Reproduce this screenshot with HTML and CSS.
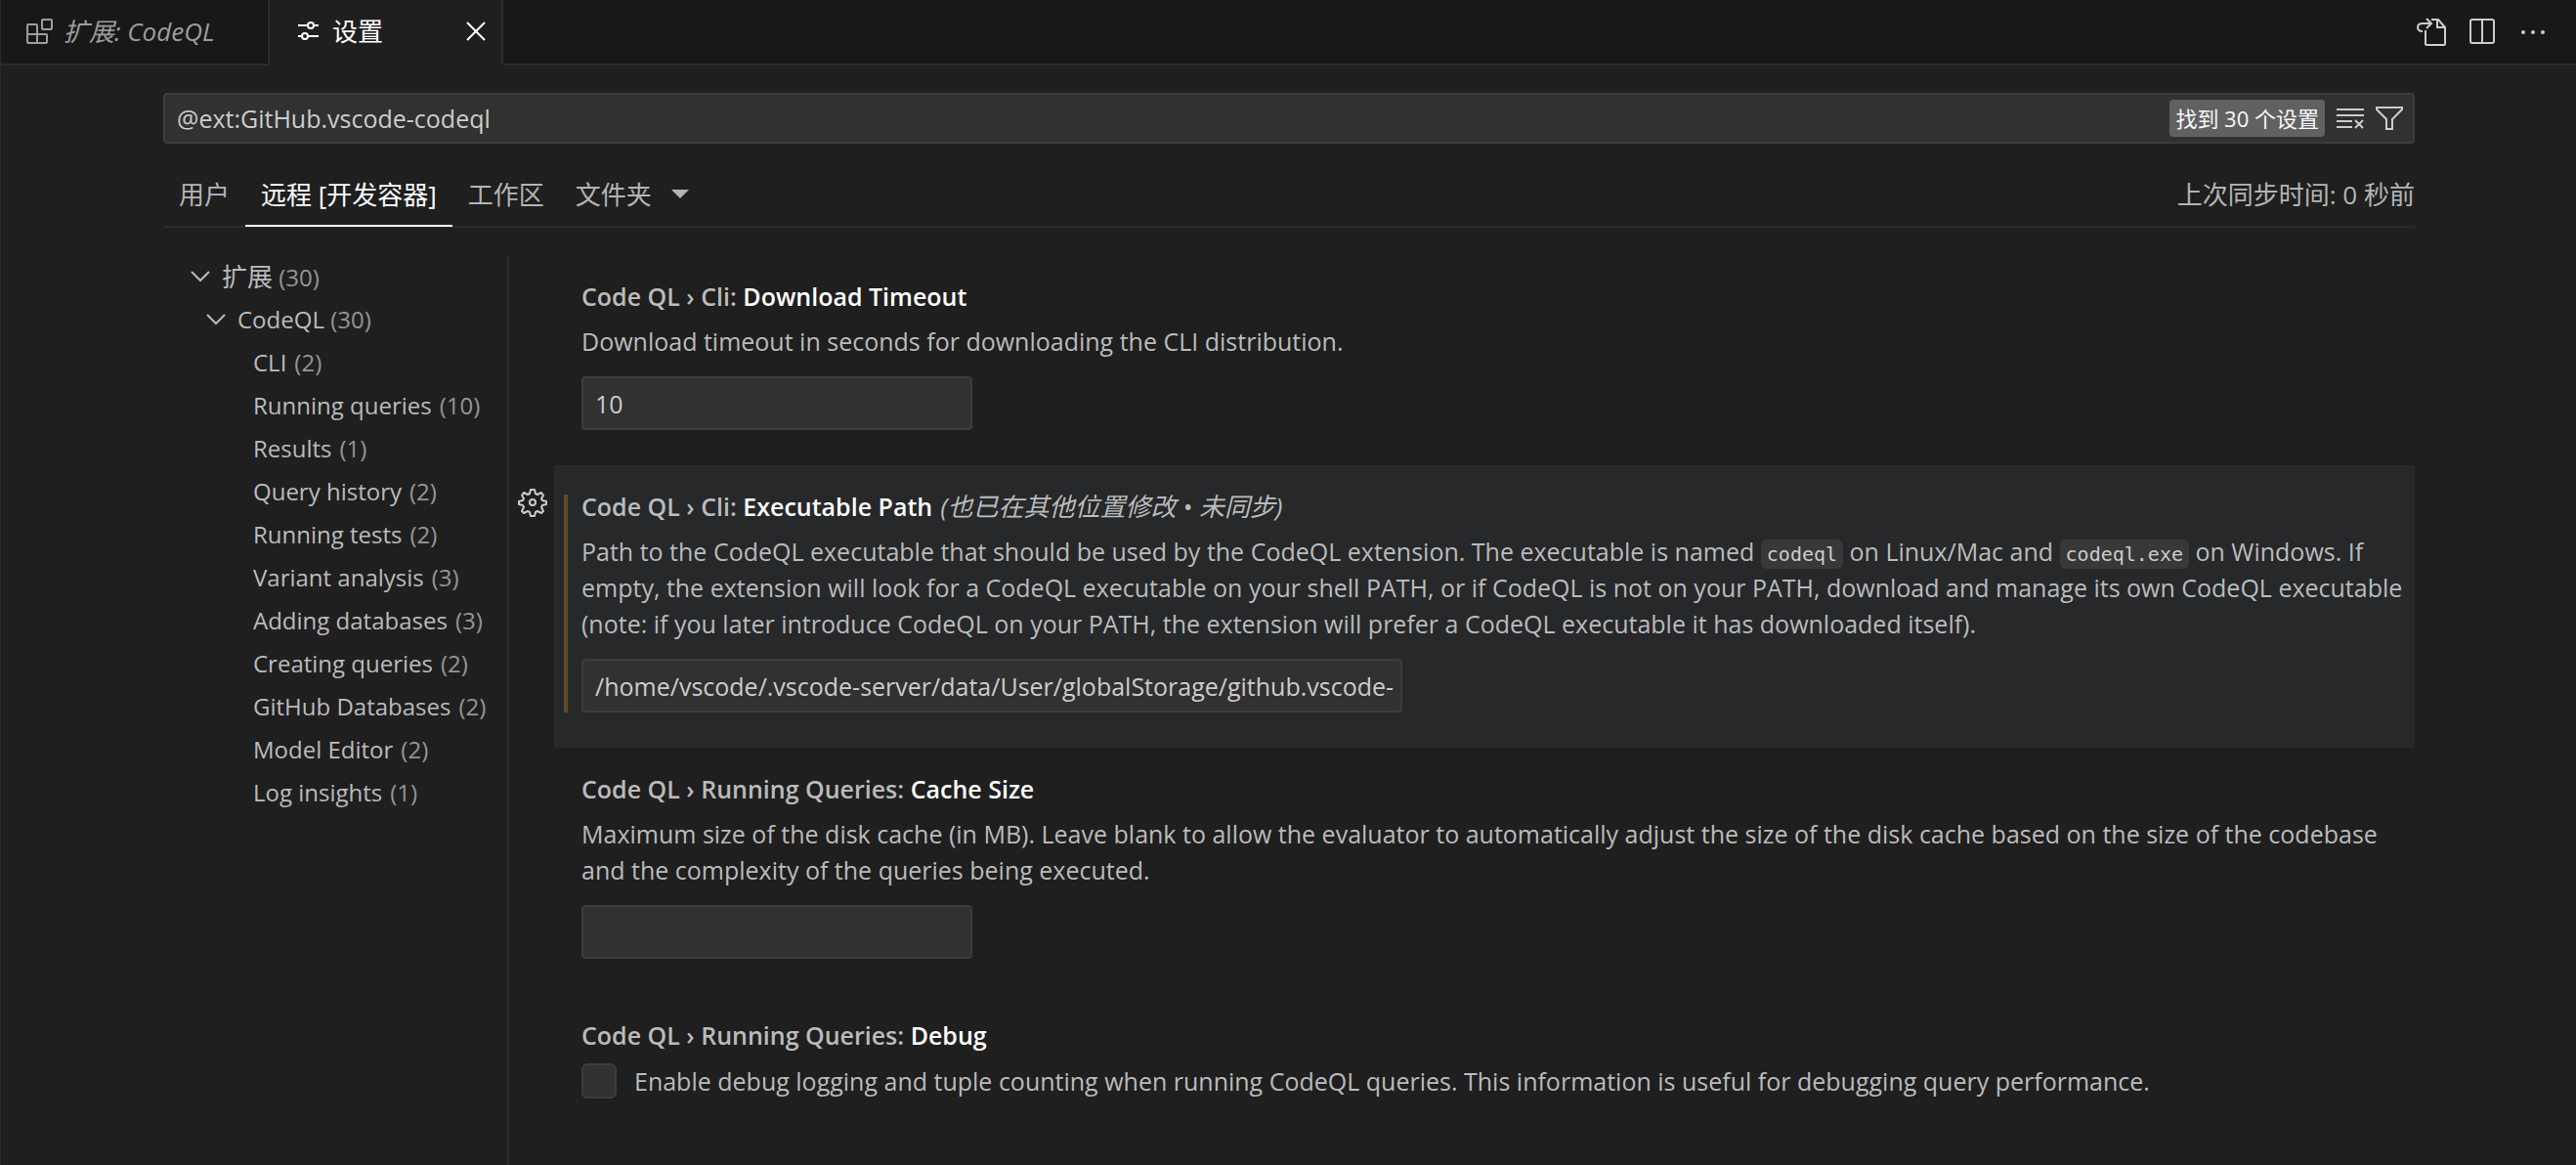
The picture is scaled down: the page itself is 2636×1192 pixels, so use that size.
FILE: index.html
```html
<!DOCTYPE html>
<html lang="zh-CN">
<head>
<meta charset="utf-8">
<title>设置</title>
<link rel="stylesheet" href="styles.css">
</head>
<body>
<div class="editor">
  <header class="tabbar">
    <div class="tab">
      <svg class="icon tab-icon" viewBox="0 0 32 32" fill="none" stroke="currentColor" stroke-width="2"><path d="M3 19V10q0-1 1-1h8q1 0 1 1v18H4q-1 0-1-1v-8h19q1 0 1 1v7q0 1-1 1h-9"/><rect x="18" y="4" width="10" height="10" rx="1"/></svg>
      <span class="tab-label preview">扩展: CodeQL</span>
    </div>
    <div class="tab active">
      <svg class="icon tab-icon" viewBox="0 0 32 32" fill="none" stroke="currentColor" stroke-width="2"><path d="M5 10h10M21 10h5M5 21h4M15 21h11"/><circle cx="18" cy="10" r="3"/><circle cx="12" cy="21" r="3"/></svg>
      <span class="tab-label">设置</span>
      <button class="icon-button close" aria-label="关闭"><svg class="icon" viewBox="0 0 32 32" fill="none" stroke="currentColor" stroke-width="2"><path d="M7 7l18 18M25 7L7 25"/></svg></button>
    </div>
    <div class="tab-actions">
      <button class="icon-button" aria-label="打开设置 (json)"><svg class="icon" viewBox="0 0 32 32" fill="none" stroke="currentColor" stroke-width="2"><path d="M10 14v14q0 1 1 1h18q1 0 1-1V11l-7-8h-7M22 3v8h8"/><path d="M7 15q-5 0-5-4t5-4h8M11 2l5 5-5 5"/></svg></button>
      <button class="icon-button" aria-label="拆分编辑器"><svg class="icon" viewBox="0 0 32 32" fill="none" stroke="currentColor" stroke-width="2"><rect x="4" y="3" width="24" height="24" rx="2"/><path d="M16 3v24"/></svg></button>
      <button class="icon-button" aria-label="更多操作"><svg class="icon" viewBox="0 0 32 32" fill="currentColor"><circle cx="6" cy="16" r="2"/><circle cx="16" cy="16" r="2"/><circle cx="26" cy="16" r="2"/></svg></button>
    </div>
  </header>

  <main class="settings">
    <div class="search">
      <input class="search-input" type="text" aria-label="搜索设置" value="@ext:GitHub.vscode-codeql">
      <span class="count">找到 30 个设置</span>
      <button class="icon-button" aria-label="清除"><svg class="icon" viewBox="0 0 32 32" fill="none" stroke="currentColor" stroke-width="2"><path d="M2 7h28M2 13h28M2 19h16M2 25h16M21 18l8 8M29 18l-8 8"/></svg></button>
      <button class="icon-button" aria-label="筛选"><svg class="icon" viewBox="0 0 32 32" fill="none" stroke="currentColor" stroke-width="2"><path d="M3 5h26v2L19 17v10h-6V17L3 7z"/></svg></button>
    </div>

    <nav class="scopes">
      <button class="scope">用户</button>
      <button class="scope selected">远程 [开发容器]</button>
      <button class="scope">工作区</button>
      <button class="scope">文件夹<svg class="caret" viewBox="0 0 18 9" fill="currentColor"><path d="M0 0h18L9 9z"/></svg></button>
      <span class="sync">上次同步时间: 0 秒前</span>
    </nav>

    <div class="body">
      <ul class="toc">
        <li class="node level-1"><svg class="chevron" viewBox="0 0 20 12" fill="none" stroke="currentColor" stroke-width="2"><path d="M1 1l9 9 9-9"/></svg><span><span class="group">扩展</span> <span class="num">(30)</span></span></li>
        <li class="node level-2"><svg class="chevron" viewBox="0 0 20 12" fill="none" stroke="currentColor" stroke-width="2"><path d="M1 1l9 9 9-9"/></svg><span>CodeQL <span class="num">(30)</span></span></li>
        <li class="node leaf">CLI <span class="num">(2)</span></li>
        <li class="node leaf">Running queries <span class="num">(10)</span></li>
        <li class="node leaf">Results <span class="num">(1)</span></li>
        <li class="node leaf">Query history <span class="num">(2)</span></li>
        <li class="node leaf">Running tests <span class="num">(2)</span></li>
        <li class="node leaf">Variant analysis <span class="num">(3)</span></li>
        <li class="node leaf">Adding databases <span class="num">(3)</span></li>
        <li class="node leaf">Creating queries <span class="num">(2)</span></li>
        <li class="node leaf">GitHub Databases <span class="num">(2)</span></li>
        <li class="node leaf">Model Editor <span class="num">(2)</span></li>
        <li class="node leaf">Log insights <span class="num">(1)</span></li>
      </ul>

      <div class="list">
        <section class="row">
          <div class="gutter"></div>
          <div class="setting">
            <label class="title" for="timeout">Code QL › Cli: <span class="name">Download Timeout</span></label>
            <p class="desc">Download timeout in seconds for downloading the CLI distribution.</p>
            <input class="field short" id="timeout" type="text" value="10">
          </div>
        </section>
        <section class="row">
          <div class="gutter"><button class="icon-button" aria-label="更多操作"><svg class="icon" viewBox="0 0 32 32" fill="none" stroke="currentColor" stroke-width="2" stroke-linejoin="round"><path d="M14 3h4l1 4 2 1 4-2 2 3-2 3 1 2 4 1v3l-4 1-1 2 2 4-2 2-4-2-2 1-1 4h-4l-1-4-2-1-4 2-2-2 2-4-1-2-4-1v-3l4-1 1-2-2-3 2-3 4 2 2-1z"/><circle cx="16" cy="16" r="3"/></svg></button></div>
          <div class="setting focused modified">
            <label class="title" for="path">Code QL › Cli: <span class="name">Executable Path</span><em class="hint">(也已在其他位置修改 • 未同步)</em></label>
            <p class="desc">Path to the CodeQL executable that should be used by the CodeQL extension. The executable is named <code>codeql</code> on Linux/Mac and <code>codeql.exe</code> on Windows. If empty, the extension will look for a CodeQL executable on your shell PATH, or if CodeQL is not on your PATH, download and manage its own CodeQL executable (note: if you later introduce CodeQL on your PATH, the extension will prefer a CodeQL executable it has downloaded itself).</p>
            <input class="field long" id="path" type="text" value="/home/vscode/.vscode-server/data/User/globalStorage/github.vscode-">
          </div>
        </section>
        <section class="row">
          <div class="gutter"></div>
          <div class="setting">
            <label class="title" for="cache">Code QL › Running Queries: <span class="name">Cache Size</span></label>
            <p class="desc">Maximum size of the disk cache (in MB). Leave blank to allow the evaluator to automatically adjust the size of the disk cache based on the size of the codebase and the complexity of the queries being executed.</p>
            <input class="field short" id="cache" type="text" value="">
          </div>
        </section>
        <section class="row">
          <div class="gutter"></div>
          <div class="setting">
            <div class="title">Code QL › Running Queries: <span class="name">Debug</span></div>
            <div class="check">
              <input class="checkbox" id="debug" type="checkbox">
              <label for="debug">Enable debug logging and tuple counting when running CodeQL queries. This information is useful for debugging query performance.</label>
            </div>
          </div>
        </section>
      </div>
    </div>
  </main>
</div>
</body>
</html>
```
FILE: styles.css
```css
* {
  box-sizing: border-box;
}

body {
  margin: 0;
  background: #1f1f1f;
  color: #cccccc;
  font: 25px/36px "Open Sans", "Noto Sans CJK SC", sans-serif;
}

button,
input {
  font: inherit;
  color: inherit;
}

.editor {
  display: flex;
  flex-direction: column;
  min-height: 100vh;
  border-left: 1px solid #2b2b2b;
}

.icon {
  display: block;
  width: 32px;
  height: 32px;
  flex: none;
}

.icon-button {
  padding: 0;
  border: 0;
  background: none;
}

/* Tabs */
.tabbar {
  display: flex;
  height: 67px;
  background: #181818;
}

.tab {
  display: flex;
  align-items: center;
  width: 275px;
  padding: 0 10px 2px 24px;
  border-right: 2px solid #2b2b2b;
  border-bottom: 2px solid #2b2b2b;
  color: #9d9d9d;
  font-size: 26px;
}

.tab.active {
  width: 239px;
  border-bottom-color: #1f1f1f;
  background: #1f1f1f;
  color: #ffffff;
}

.tab-icon {
  margin-right: 8px;
}

.preview {
  font-style: italic;
}

.close {
  margin-left: auto;
}

.tab-actions {
  display: flex;
  flex: 1;
  align-items: center;
  justify-content: flex-end;
  gap: 20px;
  padding-right: 28px;
  border-bottom: 2px solid #2b2b2b;
}

/* Search and scopes */
.settings {
  display: flex;
  flex: 1;
  flex-direction: column;
  padding: 28px 165px 0 166px;
}

.search {
  display: flex;
  align-items: center;
  height: 52px;
  padding-right: 8px;
  border: 2px solid #3c3c3c;
  border-radius: 4px;
  background: #313131;
}

.search .icon-button {
  margin-left: 8px;
}

.search-input {
  flex: 1;
  min-width: 0;
  padding: 0 12px;
  border: 0;
  background: none;
}

.count {
  margin-right: 2px;
  padding: 1px 6px;
  border-radius: 4px;
  background: #616161;
  color: #f8f8f8;
  font-size: 22px;
}

.scopes {
  display: flex;
  height: 86px;
  padding-top: 22px;
  border-bottom: 2px solid #2b2b2b;
  font-size: 26px;
}

.scope {
  display: flex;
  align-items: center;
  gap: 20px;
  margin-bottom: -1px;
  padding: 0 16px 2px;
  border: 0;
  border-bottom: 2px solid transparent;
  background: none;
  color: #b5b5b5;
}

.scope.selected {
  border-bottom-color: #ffffff;
  color: #ffffff;
}

.caret {
  width: 18px;
  height: 9px;
}

.sync {
  margin-left: auto;
  padding-top: 12px;
  color: #b5b5b5;
}

/* Table of contents */
.body {
  display: flex;
  flex: 1;
  padding-top: 28px;
}

.toc {
  flex: none;
  width: 354px;
  margin: 0;
  padding: 0;
  border-right: 2px solid #2b2b2b;
  list-style: none;
  color: #bbbbbb;
  font-size: 24px;
}

.node {
  display: flex;
  align-items: center;
  gap: 12px;
  height: 44px;
}

.level-1 {
  padding-left: 28px;
}

.level-2 {
  padding-left: 44px;
}

.leaf {
  gap: 8px;
  padding-left: 92px;
}

.group {
  font-size: 26px;
}

.num {
  color: #959595;
}

.chevron {
  width: 20px;
  height: 12px;
}

/* Settings */
.list {
  flex: 1;
}

.row {
  display: flex;
}

.gutter {
  flex: none;
  width: 46px;
  padding: 22px 0 0 8px;
}

.setting {
  position: relative;
  flex: 1;
  padding: 23px 10px 36px 28px;
}

.focused {
  background: #26282a;
}

.modified::before {
  content: "";
  position: absolute;
  top: 30px;
  bottom: 36px;
  left: 10px;
  width: 4px;
  background: #5f4c26;
}

.title {
  display: block;
  line-height: 38px;
  font-weight: 600;
  color: #bbbbbb;
}

.name {
  color: #ffffff;
}

.hint {
  margin-left: 8px;
  font-size: 26px;
  font-weight: 400;
}

.desc {
  margin: 9px 0 17px;
  line-height: 37px;
  color: #bbbbbb;
}

code {
  padding: 3px 6px;
  border-radius: 6px;
  background: #383838;
  color: #cccccc;
  font: 20px "DejaVu Sans Mono", monospace;
}

.field {
  display: block;
  height: 55px;
  padding: 0 0 0 12px;
  border: 2px solid #3c3c3c;
  border-radius: 4px;
  background: #313131;
}

.short {
  width: 400px;
}

.long {
  width: 840px;
}

.check {
  display: flex;
  gap: 18px;
  margin-top: 10px;
  color: #bbbbbb;
}

.checkbox {
  flex: none;
  width: 36px;
  height: 36px;
  margin: 0;
  appearance: none;
  border: 2px solid #3c3c3c;
  border-radius: 6px;
  background: #313131;
}
```
